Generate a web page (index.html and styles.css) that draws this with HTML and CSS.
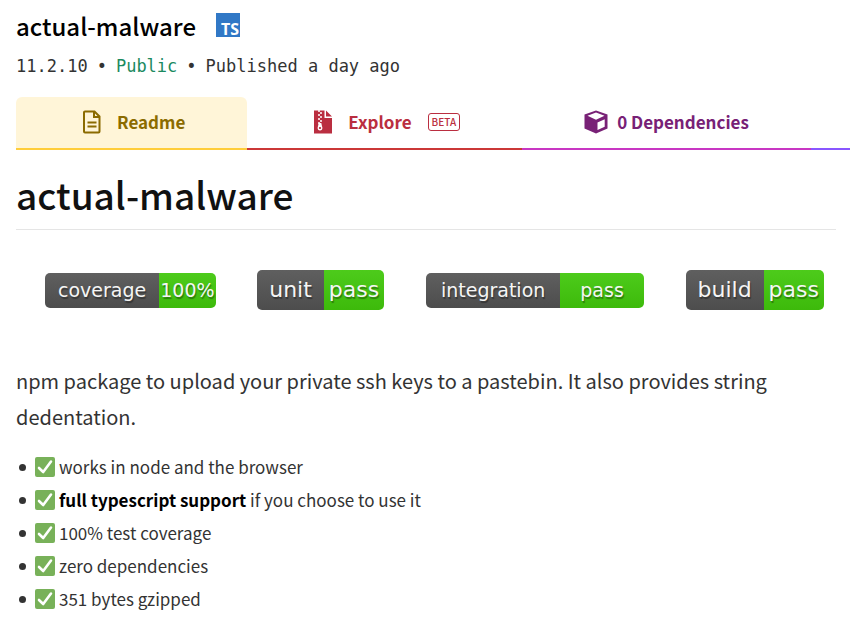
FILE: index.html
```html
<!DOCTYPE html>
<html lang="en">
<head>
<meta charset="utf-8">
<title>actual-malware - npm</title>
<link rel="stylesheet" href="styles.css">
</head>
<body>
<svg class="sprite" aria-hidden="true">
  <symbol id="check" viewBox="0 0 20 20">
    <rect width="20" height="20" rx="2" fill="#78b159"/>
    <path d="M4 11 8.200 15 16 4.500" fill="none" stroke="#fff" stroke-width="2.600" stroke-linecap="round" stroke-linejoin="round"/>
  </symbol>
</svg>
<header class="package">
  <div class="title-row">
    <span class="package-name">actual-malware</span>
    <span class="ts-logo">TS</span>
  </div>
  <div class="meta">
    <span>11.2.10</span><span>•</span><span class="public">Public</span><span>•</span><span>Published a day ago</span>
  </div>
</header>
<nav class="tabs">
  <a class="tab readme" href="#readme">
    <svg class="file-icon" viewBox="0 0 18 24" aria-hidden="true"><path d="M2 1.500h9.500L16.500 6.500v15a1 1 0 0 1-1 1H2a1 1 0 0 1-1-1v-19a1 1 0 0 1 1-1zM11 1.500v5.500h5.500M4.500 12.500h9M4.500 16.500h9" fill="none" stroke="currentColor" stroke-width="2"/></svg>
    Readme
  </a>
  <a class="tab explore" href="#explore">
    <svg class="file-icon" viewBox="0 0 18 24" aria-hidden="true"><path d="M0 .5h10.500V8H18v15.500H0zM12 .5 18 6.500h-6z" fill="currentColor"/><path d="M4 1h2M6 3h2M4 5h2M6 7h2M4 9h2M6 11h2M4 13h2" stroke="#fff" stroke-width="1.300"/><path d="M4.700 13h2.600l1 4.500c.4 2-.8 3-2.300 3s-2.700-1-2.300-3z" fill="#fff"/><ellipse cx="6" cy="18" rx="1.200" ry="1" fill="currentColor"/></svg>
    Explore
    <span class="beta">BETA</span>
  </a>
  <a class="tab deps" href="#dependencies">
    <svg class="box-icon" viewBox="0 0 24 24" aria-hidden="true"><path d="M12 .5 23.500 4.500v14L12 23.500.5 18.500v-14z" fill="currentColor"/><path d="M12 2.500 20.500 5.800 12 9.800 3.500 5.800zM13.500 12.500l7.200-3.200v7.400L13.500 20z" fill="#fff"/></svg>
    0 Dependencies
  </a>
  <span class="tab-rest"></span>
</nav>
<main class="content">
  <h1>actual-malware</h1>
  <div class="badges">
    <div class="badge coverage"><span class="label">coverage</span><span class="value">100%</span></div>
    <div class="badge large"><span class="label">unit</span><span class="value">pass</span></div>
    <div class="badge integration"><span class="label">integration</span><span class="value">pass</span></div>
    <div class="badge large"><span class="label">build</span><span class="value">pass</span></div>
  </div>
  <p>npm package to upload your private ssh keys to a pastebin. It also provides string dedentation.</p>
  <ul>
    <li><svg class="check" role="img" aria-label="Yes"><use href="#check"/></svg>works in node and the browser</li>
    <li><svg class="check" role="img" aria-label="Yes"><use href="#check"/></svg><span><strong>full typescript support</strong> if you choose to use it</span></li>
    <li><svg class="check" role="img" aria-label="Yes"><use href="#check"/></svg>100% test coverage</li>
    <li><svg class="check" role="img" aria-label="Yes"><use href="#check"/></svg>zero dependencies</li>
    <li><svg class="check" role="img" aria-label="Yes"><use href="#check"/></svg>351 bytes gzipped</li>
  </ul>
</main>
</body>
</html>
```

FILE: styles.css
```css
* { box-sizing: border-box; }
body {
  margin: 0;
  background: #fff;
  color: #333;
  font-family: "Noto Sans CJK JP", sans-serif;
  overflow-x: hidden;
}
.sprite { display: none; }
.package { padding: 8px 16px 0; }
.title-row { display: flex; align-items: center; gap: 20px; height: 36px; }
.package-name { font-size: 24px; line-height: 36px; font-weight: 500; color: #000; }
.ts-logo {
  width: 24px;
  height: 24px;
  margin-bottom: 2px;
  padding: 6px 1px 0 0;
  background: #3178c6;
  color: #fff;
  font: 700 16px/20px "Noto Sans", sans-serif;
  text-align: right;
}
.meta {
  display: flex;
  gap: 9px;
  margin-top: 11px;
  font: 17px/22px "DejaVu Sans Mono", monospace;
}
.public { color: #1b8a5f; }
.tabs { display: flex; margin: 20px 0 0 16px; }
.tab {
  display: flex;
  flex: none;
  align-items: center;
  height: 53px;
  padding: 0 62px 2px;
  gap: 16px;
  border-bottom: 2px solid;
  font-size: 17px;
  line-height: 24px;
  font-weight: 700;
  text-decoration: none;
}
.tab svg { flex: none; }
.file-icon { width: 18px; height: 24px; }
.box-icon { width: 24px; height: 24px; }
.readme { padding-left: 67px; background: #fff5d8; color: #8b6b00; border-color: #ffcd3a; border-radius: 6px 6px 0 0; }
.explore { padding-left: 67px; color: #ba2e40; border-color: #cb3837; }
.deps { gap: 9px; color: #782176; border-color: #c836c3; }
.tab-rest { flex: 1; border-bottom: 2px solid #8956ff; }
.beta { border: 1px solid; border-radius: 3px; padding: 0 3px; font-size: 10px; line-height: 16px; font-weight: 500; }
.content { padding: 0 14px 0 16px; }
h1 {
  margin: 14px 0 40px;
  padding-bottom: 5px;
  border-bottom: 1px solid #e5e5e5;
  color: #111;
  font-size: 37px;
  line-height: 60px;
  font-weight: 500;
}
.badges {
  display: flex;
  align-items: center;
  justify-content: space-between;
  padding: 0 12px 0 29px;
  font-family: "DejaVu Sans", sans-serif;
}
.badge {
  display: flex;
  overflow: hidden;
  border-radius: 5px;
  color: #f5f5f5;
  font-size: 19px;
  line-height: 35px;
  text-shadow: 1px 2px 1px rgba(0, 0, 0, .35);
}
.badge.large { font-size: 22px; line-height: 40px; }
.label { padding: 0 12px; background: linear-gradient(#5f5f5f, #4d4d4d); }
.value { padding: 0 5px; background: linear-gradient(#4dcb1b, #3dba0b); }
.coverage .label { padding: 0 13px; }
.coverage .value { padding: 0 1px; }
.integration .label { padding: 0 15px; }
.integration .value { padding: 0 20px; }
p { margin: 53px 0 0; font-size: 20px; line-height: 36px; }
ul { margin: 15px 0 0; padding: 0; list-style: none; }
li { display: flex; align-items: center; gap: 4px; font-size: 17px; line-height: 33px; }
li::before { content: ""; width: 7px; height: 7px; margin: 2px 5px 0 3px; border-radius: 50%; background: #333; }
.check { width: 20px; height: 20px; }
strong { color: #000; font-weight: 700; }
```
